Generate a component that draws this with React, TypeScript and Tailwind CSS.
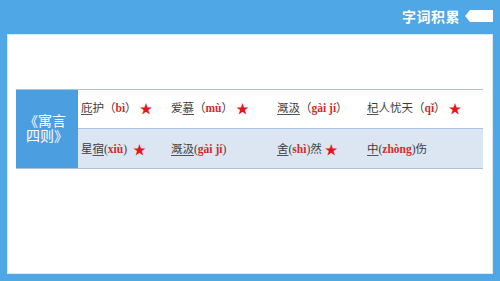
import React from 'react'

type Part = { t: string; u?: boolean; py?: boolean; star?: boolean }

const row1: Part[][] = [
  [{ t: '庇', u: true }, { t: '护（' }, { t: 'bì', py: true }, { t: '）' }, { t: '★', star: true }],
  [{ t: '爱' }, { t: '慕', u: true }, { t: '（' }, { t: 'mù', py: true }, { t: '）' }, { t: '★', star: true }],
  [{ t: '溉汲', u: true }, { t: '（' }, { t: 'gài jí', py: true }, { t: '）' }],
  [{ t: '杞', u: true }, { t: '人忧天（' }, { t: 'qǐ', py: true }, { t: '）' }, { t: '★', star: true }],
]

const row2: Part[][] = [
  [{ t: '星' }, { t: '宿', u: true }, { t: '(' }, { t: 'xiù', py: true }, { t: ') ' }, { t: '★', star: true }],
  [{ t: '溉汲', u: true }, { t: '(' }, { t: 'gài jí', py: true }, { t: ')' }],
  [{ t: '舍', u: true }, { t: '(' }, { t: 'shì', py: true }, { t: ')然' }, { t: '★', star: true }],
  [{ t: '中', u: true }, { t: '(' }, { t: 'zhòng', py: true }, { t: ')伤' }],
]

const Cell = ({ parts }: { parts: Part[] }) => (
  <div className="flex items-center pl-[3px] whitespace-pre">
    {parts.map((p, i) => {
      if (p.star) return <span key={i} className="text-[#e8141b] text-[13px] ml-[3px]">{p.t}</span>
      if (p.py) return <span key={i} className="text-[#d42a2a] font-bold">{p.t}</span>
      return (
        <span key={i} className={p.u ? 'underline underline-offset-2 decoration-[#555]' : ''}>
          {p.t}
        </span>
      )
    })}
  </div>
)

export default function App() {
  return (
    <div
      className="w-[500px] h-[281px] bg-[#4fa7e6] flex flex-col"
      style={{ fontFamily: '"Liberation Serif", "Noto Sans CJK SC", serif' }}
    >
      {/* header */}
      <div className="h-[34px] flex items-center justify-end pr-[7px] gap-[5px] pb-[2px]">
        <span
          className="text-white font-bold text-[14px] tracking-[0.5px]"
          style={{ fontFamily: '"Noto Sans CJK SC", sans-serif' }}
        >
          字词积累
        </span>
        <svg width="28" height="12" viewBox="0 0 28 12">
          <polygon points="0,6 5,0 28,0 28,12 5,12" fill="#fff" />
        </svg>
      </div>

      {/* panel */}
      <div className="flex-1 mx-[7px] mb-[7px] bg-white border border-[#d6ebf8] pt-[54px] pl-[8px] pr-[9px]">
        <div className="flex text-[11.5px] text-[#3c3c3c] border-y border-[#a9c3e5]">
          <div className="w-[62px] bg-[#4b9fe1] flex flex-col items-center justify-center text-white text-[14px] leading-[15px]">
            <span className="-ml-[4px]">《寓言</span>
            <span>四则》</span>
          </div>
          <div className="flex-1 flex flex-col">
            <div className="h-[39px] grid grid-cols-[90px_106px_90px_1fr] border-b border-[#a9c3e5]">
              {row1.map((c, i) => (
                <Cell key={i} parts={c} />
              ))}
            </div>
            <div className="h-[39px] grid grid-cols-[90px_106px_90px_1fr] bg-[#dce6f3] pt-[3px]">
              {row2.map((c, i) => (
                <Cell key={i} parts={c} />
              ))}
            </div>
          </div>
        </div>
      </div>
    </div>
  )
}
